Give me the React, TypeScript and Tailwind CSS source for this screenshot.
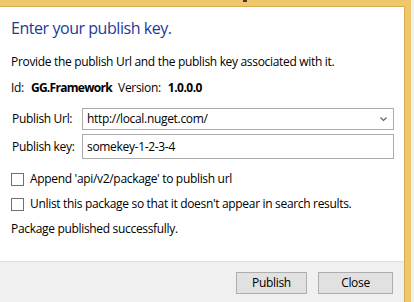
export default function App() {
  return (
    <div
      className="relative flex w-[414px] h-[302px] overflow-hidden bg-[#f0c86b] text-[#000] text-[12px] tracking-[-0.32px]"
      style={{ fontFamily: '"Open Sans", "Noto Sans", sans-serif' }}
    >
      <div className="absolute left-[243px] top-0 w-[4px] h-[2px] bg-[#3a3a3a]" />

      <div className="mt-[6px] w-[405px] flex flex-col bg-white border-t border-r border-[#d8ad4f]">
        <div className="mt-[10px] pl-[11px] h-[22px] leading-[22px] text-[16px] tracking-[-0.45px] text-[#1c3a98]">
          Enter your publish key.
        </div>
        <div className="mt-[15px] pl-[11px] h-[16px] leading-[16px]">
          Provide the publish Url and the publish key associated with it.
        </div>
        <div className="mt-[10px] pl-[11px] h-[16px] leading-[16px] flex">
          <span>Id:</span>
          <span className="ml-[7px] font-bold tracking-[-0.7px]">GG.Framework</span>
          <span className="ml-[6px]">Version:</span>
          <span className="ml-[7px] font-bold tracking-[-0.5px]">1.0.0.0</span>
        </div>

        <div className="mt-[12px] flex items-center h-[22px]">
          <span className="w-[82px] pl-[12px]">Publish Url:</span>
          <div className="w-[312px] h-[22px] flex items-center justify-between border border-[#ababab] pl-[4px] pr-[6px]">
            <span>http://local.nuget.com/</span>
            <svg width="7" height="5" viewBox="0 0 7 5" className="mt-[1px]">
              <path d="M0.5 0.5 L3.5 3.5 L6.5 0.5" fill="none" stroke="#606060" strokeWidth="1.2" />
            </svg>
          </div>
        </div>
        <div className="mt-[4px] flex items-center h-[25px]">
          <span className="w-[82px] pl-[12px]">Publish key:</span>
          <div className="w-[312px] h-[25px] flex items-center border border-[#ababab] pl-[4px]">
            somekey-1-2-3-4
          </div>
        </div>

        <div className="mt-[12px] pl-[11px] h-[16px] flex items-center">
          <div className="w-[13px] h-[13px] border border-[#707070] bg-white" />
          <span className="ml-[6px]">Append 'api/v2/package' to publish url</span>
        </div>
        <div className="mt-[9px] pl-[11px] h-[16px] flex items-center">
          <div className="w-[13px] h-[13px] border border-[#707070] bg-white" />
          <span className="ml-[6px]">Unlist this package so that it doesn't appear in search results.</span>
        </div>
        <div className="mt-[9px] pl-[11px] h-[16px] leading-[16px]">Package published successfully.</div>

        <div className="mt-auto h-[41px] bg-[#f0f0f0] border-t border-[#dfdfdf] flex justify-end gap-[11px] pt-[10px] pr-[11px]">
          <button className="w-[71px] h-[22px] bg-[#e1e1e1] border border-[#adadad] leading-[20px]">Publish</button>
          <button className="w-[75px] h-[22px] bg-[#e1e1e1] border border-[#adadad] leading-[20px]">Close</button>
        </div>
      </div>

      <div className="w-[6px]" />
      <div className="flex-1 bg-[#f3f3f3]" />
    </div>
  )
}
